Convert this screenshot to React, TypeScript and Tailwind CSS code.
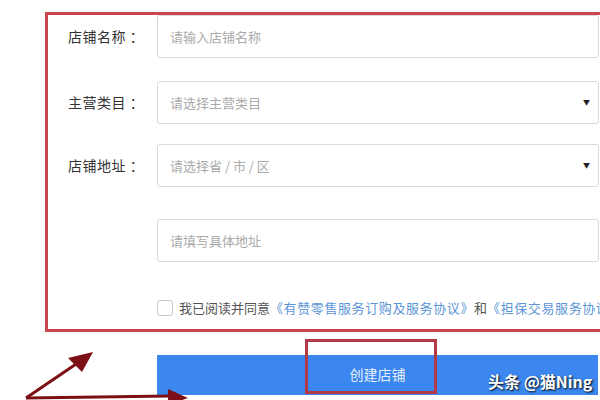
import React from "react";

const font = { fontFamily: '"Noto Sans CJK SC", "Noto Sans", sans-serif' };

function Row({ label, placeholder, select, mt }: { label?: string; placeholder: string; select?: boolean; mt: string }) {
  return (
    <div className={`flex items-center ${mt}`}>
      <div className="w-[109px] shrink-0 whitespace-nowrap pl-[20px] text-[14px] tracking-[0.5px] text-[#333]">{label ? `${label} ：` : ""}</div>
      <div className="flex h-[43px] w-[442px] shrink-0 items-center justify-between rounded-[3px] border border-[#d9d9d9] bg-white pl-[12px] pr-[8px]">
        <span className="text-[13px] text-[#aaa]">{placeholder}</span>
        {select && <span className="text-[7px] text-[#222]">▼</span>}
      </div>
    </div>
  );
}

export default function App() {
  return (
    <div className="relative h-[400px] w-[600px] overflow-hidden bg-white" style={font}>
      <div className="pl-[45px] pt-[12px]">
        <div className="w-[600px] border-[3px] border-[#c9474f] pb-[11px]">
          <Row label="店铺名称" placeholder="请输入店铺名称" mt="mt-0" />
          <Row label="主营类目" placeholder="请选择主营类目" select mt="mt-[23px]" />
          <Row label="店铺地址" placeholder="请选择省 / 市 / 区" select mt="mt-[20px]" />
          <Row placeholder="请填写具体地址" mt="mt-[32px]" />
          <div className="mt-[36px] flex items-center pl-[109px]">
            <div className="h-[16px] w-[16px] shrink-0 rounded-[3px] border border-[#c8c8c8] bg-white" />
            <span className="ml-[6px] whitespace-nowrap text-[13px] text-[#555]">
              我已阅读并同意
              <span className="tracking-[0.6px] text-[#5b95d6]">《有赞零售服务订购及服务协议》</span>
              和
              <span className="tracking-[0.6px] text-[#5b95d6]">《担保交易服务协议》</span>
            </span>
          </div>
        </div>
        <div className="ml-[112px] mt-[23px] flex h-[40px] w-[441px] items-center justify-center bg-[#3b87ef]">
          <span className="text-[14px] text-[#e8f0fb]">创建店铺</span>
        </div>
      </div>
      <div className="absolute left-[305px] top-[339px] h-[55px] w-[132px] border-[3px] border-[#b23a48]" />
      <div className="absolute left-[488px] top-[369px] text-[16px] font-semibold text-white [text-shadow:1px_1px_2px_#000]">
        头条 @猫Ning
      </div>
      <svg className="absolute left-0 top-0" width="600" height="400">
        <line x1="26" y1="398" x2="82" y2="360" stroke="#7d1016" strokeWidth="3" />
        <polygon points="93,352 68,358 82,372" fill="#7d1016" />
        <line x1="26" y1="398" x2="170" y2="396" stroke="#7d1016" strokeWidth="3" />
        <polygon points="188,398 168,389 168,405" fill="#7d1016" />
      </svg>
    </div>
  );
}
